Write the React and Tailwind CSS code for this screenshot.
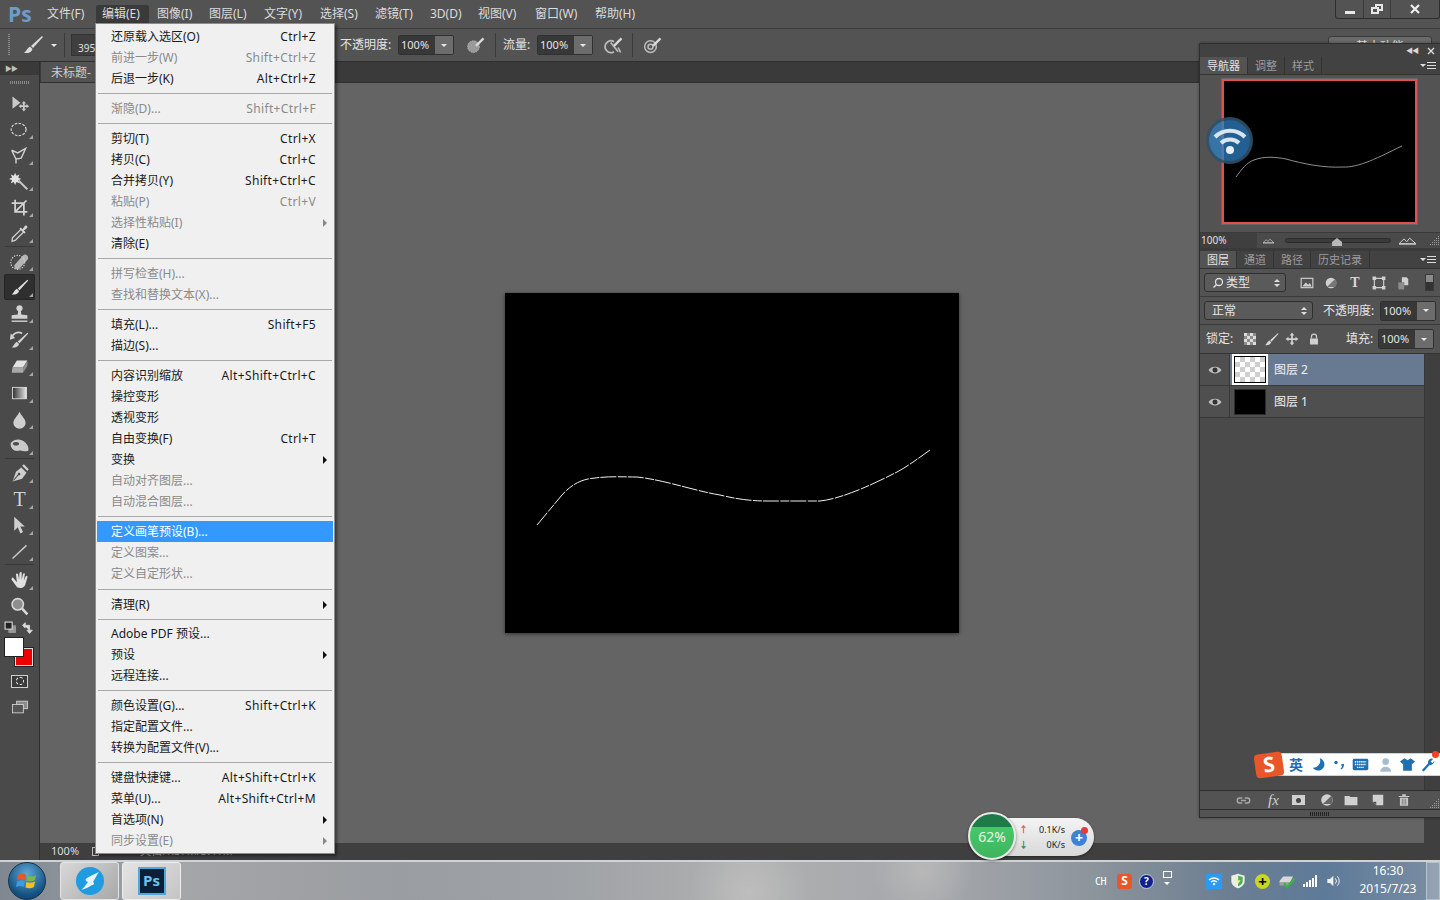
import React from 'react';

const topMenus = [
  ['文件(F)', 'w-[49px]'],
  ['编辑(E)', 'w-[53px] mr-[8px] pl-[6px] bg-[#3a3a3a] rounded-t-[2px]'],
  ['图像(I)', 'w-[52px]'],
  ['图层(L)', 'w-[55px]'],
  ['文字(Y)', 'w-[56px]'],
  ['选择(S)', 'w-[55px]'],
  ['滤镜(T)', 'w-[55px]'],
  ['3D(D)', 'w-[48px]'],
  ['视图(V)', 'w-[57px]'],
  ['窗口(W)', 'w-[60px]'],
  ['帮助(H)', 'w-[60px]'],
];

// null = separator, sep sets a separator of another height
const editMenu = [
  { t: '还原载入选区(O)', k: 'Ctrl+Z' },
  { t: '前进一步(W)', k: 'Shift+Ctrl+Z', d: 1 },
  { t: '后退一步(K)', k: 'Alt+Ctrl+Z' },
  null,
  { t: '渐隐(D)...', k: 'Shift+Ctrl+F', d: 1 },
  null,
  { t: '剪切(T)', k: 'Ctrl+X' },
  { t: '拷贝(C)', k: 'Ctrl+C' },
  { t: '合并拷贝(Y)', k: 'Shift+Ctrl+C' },
  { t: '粘贴(P)', k: 'Ctrl+V', d: 1 },
  { t: '选择性粘贴(I)', d: 1, a: 1 },
  { t: '清除(E)' },
  null,
  { t: '拼写检查(H)...', d: 1 },
  { t: '查找和替换文本(X)...', d: 1 },
  null,
  { t: '填充(L)...', k: 'Shift+F5' },
  { t: '描边(S)...' },
  null,
  { t: '内容识别缩放', k: 'Alt+Shift+Ctrl+C' },
  { t: '操控变形' },
  { t: '透视变形' },
  { t: '自由变换(F)', k: 'Ctrl+T' },
  { t: '变换', a: 1 },
  { t: '自动对齐图层...', d: 1 },
  { t: '自动混合图层...', d: 1 },
  null,
  { t: '定义画笔预设(B)...', h: 1 },
  { t: '定义图案...', d: 1 },
  { t: '定义自定形状...', d: 1 },
  { sep: 'h-[10px]' },
  { t: '清理(R)', a: 1 },
  { sep: 'h-[8px]' },
  { t: 'Adobe PDF 预设...' },
  { t: '预设', a: 1 },
  { t: '远程连接...' },
  null,
  { t: '颜色设置(G)...', k: 'Shift+Ctrl+K' },
  { t: '指定配置文件...' },
  { t: '转换为配置文件(V)...' },
  null,
  { t: '键盘快捷键...', k: 'Alt+Shift+Ctrl+K' },
  { t: '菜单(U)...', k: 'Alt+Shift+Ctrl+M' },
  { t: '首选项(N)', a: 1 },
  { t: '同步设置(E)', d: 1, a: 1 },
];

function Ico({ children, size = 22, box = 24, className = '' }) {
  return (
    <svg width={size} height={size} viewBox={`0 0 ${box} ${box}`} className={`shrink-0 ${className}`}>
      {children}
    </svg>
  );
}

const BrushGlyph = ({ c = '#d2d2d2' }) => (
  <g>
    <path d="M21 3 L22 4 L12 15 L10 13 Z" fill={c} />
    <path d="M9 13.5 L11.5 16 C10.5 19.5 7 20.5 3 20 C5.5 18.5 6 15 9 13.5 Z" fill={c} />
  </g>
);

const tool = {
  move: (
    <g fill="#c9c9c9">
      <path d="M4 4 L4 18 L13 11 Z" />
      <path d="M17 9 L19.5 12 L18 12 L18 14 L20 14 L20 12.5 L23 15 L20 17.5 L20 16 L18 16 L18 18 L19.5 18 L17 21 L14.5 18 L16 18 L16 16 L14 16 L14 17.5 L11 15 L14 12.5 L14 14 L16 14 L16 12 L14.5 12 Z" />
    </g>
  ),
  ellipse: <ellipse cx="11" cy="12" rx="8.5" ry="7" fill="none" stroke="#d2d2d2" strokeWidth="1.4" strokeDasharray="3 1.5" />,
  lasso: <path d="M3 6 L10 9 L19 4 L14 15 L8 16 L8 21 M8 16 L3 6" fill="none" stroke="#d2d2d2" strokeWidth="1.6" />,
  wand: (
    <g>
      <path d="M11 11 L21 21" stroke="#c9c9c9" strokeWidth="2.4" />
      <path d="M7 2 L8.5 5.5 L12 4 L10.5 7.5 L14 9 L10.5 10.5 L12 14 L8.5 12.5 L7 16 L5.5 12.5 L2 14 L3.5 10.5 L0 9 L3.5 7.5 L2 4 L5.5 5.5 Z" fill="#e2e2e2" />
    </g>
  ),
  crop: <path d="M7 3 L7 17 L21 17 M3 7 L17 7 L17 21 M7 17 L20 4" fill="none" stroke="#d2d2d2" strokeWidth="2" />,
  dropper: (
    <g>
      <path d="M14 7 L17 10 L7 20 L3.5 21 L4 17 Z" fill="none" stroke="#d2d2d2" strokeWidth="1.5" />
      <path d="M13 5 L15.5 7 L18 3.5 C20 2 22 4 20.5 6 L17 8.5 L19 11 L17.5 12 L12 6.5 Z" fill="#d2d2d2" />
    </g>
  ),
  heal: (
    <g>
      <path d="M7 15 L16 5 C19 2 24 7 21 10 L12 20 C8 23 4 18 7 15 Z" fill="#b4b4b4" />
      <circle cx="10" cy="13" r="8" fill="none" stroke="#d8d8d8" strokeWidth="1.2" strokeDasharray="1.5 1.5" />
    </g>
  ),
  brush: <BrushGlyph c="#e0e0e0" />,
  stamp: (
    <g fill="#d2d2d2">
      <circle cx="12" cy="6" r="3.5" />
      <path d="M10.5 8 L13.5 8 L14 13 L21 14 L21 18 L3 18 L3 14 L10 13 Z" />
      <rect x="3" y="20" width="18" height="1.6" />
    </g>
  ),
  history: (
    <g>
      <BrushGlyph />
      <path d="M3 9 A8 8 0 0 1 15 4" fill="none" stroke="#d2d2d2" strokeWidth="1.8" />
      <path d="M2 4 L7 9 L1 11 Z" fill="#d2d2d2" />
    </g>
  ),
  eraser: (
    <g>
      <path d="M9 5 L21 5 L16 13 L4 13 Z" fill="#e2e2e2" />
      <path d="M4 13 L16 13 L16 19 L3 19 Z" fill="#a8a8a8" />
      <path d="M16 13 L21 5 L21 11 L16 19 Z" fill="#8c8c8c" />
    </g>
  ),
  gradient: (
    <g>
      <defs>
        <linearGradient id="gr" x1="0" y1="0" x2="1" y2="0">
          <stop offset="0" stopColor="#2f2f2f" />
          <stop offset="1" stopColor="#e8e8e8" />
        </linearGradient>
      </defs>
      <rect x="4" y="5" width="16" height="13" fill="url(#gr)" stroke="#dcdcdc" strokeWidth="1" />
    </g>
  ),
  blur: <path d="M12 3 C14 8 19 11 19 16 A7 6.5 0 0 1 5 16 C5 11 10 8 12 3 Z" fill="#cfcfcf" />,
  smudge: (
    <g>
      <path d="M2 9 C6 4 14 4 18 8 C21 11 23 14 22 18 C18 20 15 17 11 18 C6 19 1 15 2 9 Z" fill="#c9c9c9" />
      <ellipse cx="8" cy="10" rx="3.5" ry="2" fill="#4a4a4a" />
    </g>
  ),
  pen: (
    <g>
      <path d="M14 5 L20 11 L15 18 L4 21 L8 10 Z" fill="#cfcfcf" />
      <path d="M15 3 L17 1.5 L22.5 7 L21 9 Z" fill="#cfcfcf" />
      <path d="M5 20 L11 13" stroke="#4a4a4a" strokeWidth="1.2" />
      <circle cx="11.5" cy="12.5" r="1.5" fill="#4a4a4a" />
    </g>
  ),
  select: <path d="M6 2 L6 18 L10 14 L13 21 L16 19.5 L13 13 L18 13 Z" fill="#cfcfcf" />,
  line: <path d="M4 20 L20 5" stroke="#c9c9c9" strokeWidth="1.6" />,
  hand: (
    <path d="M5 9 L9 14 L8 5 C8 3.5 10 3.5 10.5 5 L11.5 11 L12 3.5 C12.5 2 14.5 2 14.5 3.5 L14.5 11 L16 4.5 C16.5 3 18.5 3.5 18 5 L17 12 L19 7.5 C20 6.5 21.5 7 21 8.5 L18.5 17 C17 21 10 22 8 18 L3 11 C2.5 9.5 4 8 5 9 Z" fill="#e0e0e0" />
  ),
  zoom: (
    <g>
      <circle cx="10" cy="9.5" r="6.5" fill="#8e8e8e" stroke="#d8d8d8" strokeWidth="1.8" />
      <path d="M15 14.5 L21 21" stroke="#d8d8d8" strokeWidth="3" />
    </g>
  ),
};

function ToolBtn({ name, active, noFlag, className = '' }) {
  return (
    <div className={`relative h-[26px] shrink-0 flex items-center justify-center ${className}`}>
      {active && <div className="absolute left-[4px] top-0 w-[31px] h-[26px] rounded-[2px] bg-[#2f2f2f] border border-[#262626]" />}
      <div className="relative">
        {name === 'type' ? (
          <span className="block font-['Liberation_Serif',serif] text-[20px] leading-[22px] text-[#d2d2d2]">T</span>
        ) : (
          <Ico size={21}>{tool[name]}</Ico>
        )}
      </div>
      {!noFlag && <span className="absolute right-[6px] bottom-[3px] w-0 h-0 border-l-[4px] border-l-transparent border-b-[4px] border-b-[#a8a8a8]" />}
    </div>
  );
}

const ToolSep = () => <div className="h-[2px] shrink-0 mx-[5px] border-t border-[#383838] border-b-[#666]" />;

function Tools() {
  return (
    <div className="w-[40px] shrink-0 flex flex-col bg-[#4a4a4a] border-r border-[#2f2f2f]">
      <div className="h-[13px] shrink-0 bg-[#3a3a3a] flex items-center pl-[5px] text-[7px] leading-none text-[#c0c0c0] tracking-[-1px]">▶▶</div>
      <div className="h-[15px] shrink-0 flex items-center justify-center">
        <div className="w-[20px] h-[3px] bg-[repeating-linear-gradient(90deg,#8a8a8a_0_1px,transparent_1px_2px)]" />
      </div>
      <ToolBtn name="move" noFlag />
      <ToolBtn name="ellipse" />
      <ToolBtn name="lasso" />
      <ToolBtn name="wand" />
      <ToolBtn name="crop" />
      <ToolBtn name="dropper" />
      <ToolSep />
      <ToolBtn name="heal" />
      <ToolBtn name="brush" active />
      <ToolBtn name="stamp" />
      <ToolBtn name="history" className="mt-[1px]" />
      <ToolBtn name="eraser" />
      <ToolBtn name="gradient" className="mt-[1px]" />
      <ToolBtn name="blur" />
      <ToolBtn name="smudge" />
      <ToolSep />
      <ToolBtn name="pen" />
      <ToolBtn name="type" />
      <ToolBtn name="select" />
      <ToolBtn name="line" />
      <ToolSep />
      <ToolBtn name="hand" className="mt-[1px]" />
      <ToolBtn name="zoom" noFlag />
      <div className="h-[16px] shrink-0 flex items-center justify-between px-[4px]">
        <Ico size={13}>
          <rect x="8" y="8" width="14" height="14" fill="#999" />
          <rect x="2" y="2" width="13" height="13" fill="#222" stroke="#ddd" strokeWidth="2" />
        </Ico>
        <Ico size={13}>
          <path d="M4 8 L14 8 L14 18 M1 8 L6 3 L6 13 Z M9 17 L19 17 L14 23 Z" fill="#ddd" stroke="#ddd" strokeWidth="1.5" />
        </Ico>
      </div>
      <div className="relative h-[33px] shrink-0">
        <div className="absolute left-[15px] top-[13px] w-[18px] h-[18px] bg-[#ee0000] border border-[#ddd] outline outline-[#222]" />
        <div className="absolute left-[4px] top-[2px] w-[20px] h-[20px] bg-white border border-[#222]" />
      </div>
      <div className="h-[26px] shrink-0 flex items-center justify-center">
        <div className="w-[17px] h-[13px] bg-[#3a3a3a] border border-[#cfcfcf] flex items-center justify-center">
          <div className="w-[8px] h-[8px] rounded-full border border-dashed border-[#e8e8e8]" />
        </div>
      </div>
      <div className="h-[26px] shrink-0 flex items-center justify-center">
        <Ico size={20}>
          <rect x="8" y="5" width="13" height="9" fill="#8a8a8a" stroke="#d8d8d8" />
          <rect x="3" y="9" width="13" height="10" fill="#555" stroke="#d8d8d8" />
        </Ico>
      </div>
    </div>
  );
}

function PctInput({ className = '' }) {
  return (
    <div className={`flex h-[20px] w-[56px] rounded-[2px] border border-[#303030] overflow-hidden ${className}`}>
      <div className="w-[36px] bg-[#383838] text-[11px] leading-[18px] text-[#e4e4e4] pl-[2px]">100%</div>
      <div className="flex-1 bg-[#6c6c6c] flex items-center justify-center">
        <span className="w-0 h-0 border-x-[3px] border-x-transparent border-t-[3px] border-t-[#e8e8e8]" />
      </div>
    </div>
  );
}

function AirBrushIcon({ kind }) {
  return (
    <Ico size={20}>
      {kind === 'ring' && (
        <g fill="none" stroke="#bdbdbd" strokeWidth="1.8">
          <circle cx="9" cy="14" r="7" />
          <circle cx="9" cy="14" r="3" />
        </g>
      )}
      {kind === 'cross' && (
        <g fill="none" stroke="#bdbdbd" strokeWidth="2">
          <path d="M12 8 A7 7 0 1 0 12 20" />
          <path d="M8 9 L17 20 M17 15 L20 21" />
        </g>
      )}
      {!kind && <circle cx="9" cy="14" r="7" fill="#9a9a9a" stroke="#bdbdbd" strokeDasharray="2 1" />}
      <path d="M11 12 L20 3 L22 5 L13 14 Z" fill="#d8d8d8" />
    </Ico>
  );
}

function OptionsBar() {
  return (
    <div className="h-[34px] bg-[#535353] border-t border-[#3c3c3c] border-b border-b-[#2f2f2f] flex items-center">
      <div className="ml-[8px] w-[2px] h-[22px] bg-[repeating-linear-gradient(180deg,#8a8a8a_0_1px,transparent_1px_2px)]" />
      <div className="ml-[11px]"><Ico size={24}><BrushGlyph c="#dcdcdc" /></Ico></div>
      <span className="ml-[6px] w-0 h-0 border-x-[3px] border-x-transparent border-t-[3px] border-t-[#e8e8e8]" />
      <div className="ml-[7px] w-px h-[24px] bg-[#3a3a3a]" />
      <div className="ml-[6px] w-[60px] h-[22px] bg-[#3f3f3f] border border-[#333] text-[10px] text-[#e0e0e0] pl-[6px] pt-[6px] leading-[14px]">395</div>
      <span className="ml-[209px] text-[12px] text-[#e4e4e4] whitespace-nowrap w-[58px]">不透明度:</span>
      <PctInput />
      <div className="ml-[12px]"><AirBrushIcon /></div>
      <div className="ml-[9px] w-px h-[24px] bg-[#3a3a3a]" />
      <span className="ml-[7px] text-[12px] text-[#e4e4e4] w-[34px]">流量:</span>
      <PctInput />
      <div className="ml-[11px]"><AirBrushIcon kind="cross" /></div>
      <div className="ml-[8px] w-px h-[24px] bg-[#3a3a3a]" />
      <div className="ml-[10px]"><AirBrushIcon kind="ring" /></div>
    </div>
  );
}

function MenuBar() {
  return (
    <div className="h-[28px] bg-[#535353] flex items-center relative">
      <span className="w-[47px] pl-[8px] text-[21px] font-bold text-[#6f9cc6] leading-none font-['Open_Sans',sans-serif]">Ps</span>
      {topMenus.map(([label, w]) => (
        <div key={label} className={`${w} h-[19px] flex items-center text-[12px] text-[#dcdcdc] whitespace-nowrap`}>
          {label}
        </div>
      ))}
      <div className="ml-auto self-start flex h-[19px] rounded-b-[3px] border border-t-0 border-[#2e2e2e] text-[#e8e8e8]">
        <div className="w-[28px] flex items-end justify-center pb-[4px] border-r border-[#3a3a3a]"><div className="w-[10px] h-[3px] bg-[#e8e8e8]" /></div>
        <div className="w-[27px] flex items-center justify-center border-r border-[#3a3a3a]">
          <div className="relative w-[12px] h-[10px]">
            <div className="absolute right-0 top-0 w-[8px] h-[7px] border-2 border-[#e8e8e8]" />
            <div className="absolute left-0 bottom-0 w-[8px] h-[7px] border-2 border-[#e8e8e8] bg-[#535353]" />
          </div>
        </div>
        <div className="w-[48px] flex items-center justify-center">
          <Ico size={12}><path d="M4 4 L20 20 M20 4 L4 20" stroke="#ececec" strokeWidth="4.5" /></Ico>
        </div>
      </div>
    </div>
  );
}

function EditMenu() {
  return (
    <div className="absolute left-[95px] top-[23px] w-[240px] h-[831px] pt-[2px] bg-[#f0f0f0] border border-[#8c8c8c] shadow-[2px_2px_3px_rgba(0,0,0,0.45)] text-[12px] z-20">
      {editMenu.map((m, i) => {
        if (!m || m.sep) {
          return (
            <div key={i} className={`${m ? m.sep : 'h-[9px]'} flex items-center px-[2px]`}>
              <div className="w-full h-px bg-[#a8a8a8]" />
            </div>
          );
        }
        const color = m.h ? 'bg-[#3399ff] text-white' : m.d ? 'text-[#8a8a8a]' : 'text-[#1a1a1a]';
        return (
          <div key={i} className={`h-[21px] mx-[1px] pl-[14px] flex items-center justify-between whitespace-nowrap ${m.a ? 'pr-[6px]' : 'pr-[17px]'} ${color}`}>
            <span>{m.t}</span>
            {m.k && <span className="tracking-[0.35px]">{m.k}</span>}
            {m.a && <span className={`w-0 h-0 border-y-[4px] border-y-transparent border-l-[4px] ${m.d ? 'border-l-[#8a8a8a]' : 'border-l-[#111]'}`} />}
          </div>
        );
      })}
    </div>
  );
}

const curve = 'M32 232 L57 202 C66 192 76 186 90 185 C105 183 120 184 132 184 C160 187 190 198 215 202 C235 207 250 208 262 208 L315 208 C335 206 365 193 392 179 C405 172 415 164 425 157';

function DocArea() {
  return (
    <div className="flex-1 min-w-0 flex flex-col">
      <div className="h-[21px] bg-[#3a3a3a] border-b border-[#2f2f2f] flex items-end pl-px">
        <div className="w-[54px] h-[20px] bg-[#535353] text-[12px] leading-[22px] text-[#cfcfcf] pl-[10px] whitespace-nowrap overflow-hidden">未标题-</div>
      </div>
      <div className="flex-1 min-h-0 bg-[#646464] flex items-center justify-center">
        <div className="w-[454px] h-[340px] bg-black shadow-[0_1px_4px_rgba(0,0,0,0.5)]">
          <svg width="454" height="340" viewBox="0 0 454 340">
            <path d={curve} fill="none" stroke="#f0f0f0" strokeWidth="1" strokeDasharray="16 1.5 9 1" />
          </svg>
        </div>
      </div>
      <div className="h-[17px] bg-[#3f3f3f] flex items-center text-[11px] text-[#dcdcdc]">
        <span className="ml-[11px] w-[41px]">100%</span>
        <span className="w-[7px] h-[9px] border border-[#bbb]" />
        <span className="ml-[41px] text-[#bdbdbd]">文档:1.37M/3.41M</span>
      </div>
    </div>
  );
}

function PanelTabs({ tabs }) {
  return (
    <div className="h-[18px] bg-[#424242] border-b border-[#333] flex items-stretch text-[11px] leading-[17px] shrink-0">
      {tabs.map((t, i) => (
        <div key={t} className={`px-[7px] border-r border-[#333] whitespace-nowrap ${i === 0 ? 'bg-[#535353] text-[#e4e4e4]' : 'text-[#9c9c9c]'}`}>{t}</div>
      ))}
      <div className="ml-auto mr-[4px] flex items-center gap-[1px]">
        <span className="w-0 h-0 border-x-[3px] border-x-transparent border-t-[3px] border-t-[#ddd]" />
        <span className="w-[9px] h-[7px] bg-[repeating-linear-gradient(180deg,#ddd_0_1px,transparent_1px_3px)]" />
      </div>
    </div>
  );
}

const Grip = () => (
  <Ico size={11} box={11}>
    <g fill="#9a9a9a">
      <rect x="9" y="1" width="1" height="1" /><rect x="7" y="3" width="1" height="1" /><rect x="9" y="3" width="1" height="1" />
      <rect x="5" y="5" width="1" height="1" /><rect x="7" y="5" width="1" height="1" /><rect x="9" y="5" width="1" height="1" />
      <rect x="3" y="7" width="1" height="1" /><rect x="5" y="7" width="1" height="1" /><rect x="7" y="7" width="1" height="1" /><rect x="9" y="7" width="1" height="1" />
      <rect x="1" y="9" width="1" height="1" /><rect x="3" y="9" width="1" height="1" /><rect x="5" y="9" width="1" height="1" /><rect x="7" y="9" width="1" height="1" /><rect x="9" y="9" width="1" height="1" />
    </g>
  </Ico>
);

const Mountain = ({ w, h }) => (
  <svg width={w} height={h} viewBox="0 0 24 10" className="shrink-0">
    <path d="M0 9 L7 2 L11 6 L15 1 L24 9 Z" fill="none" stroke="#d0d0d0" strokeWidth="1.4" />
    <rect x="0" y="8.5" width="24" height="1.5" fill="#d0d0d0" />
  </svg>
);

function SmallIcon({ children }) {
  return <Ico size={14} box={24}>{children}</Ico>;
}

function Select({ label, w, search }) {
  return (
    <div className={`${w} h-[19px] rounded-[3px] border border-[#2f2f2f] bg-[#5a5a5a] flex items-center text-[12px] text-[#e4e4e4] pl-[7px]`}>
      {search && (
        <svg width="12" height="12" viewBox="0 0 12 12" className="mr-[2px]">
          <circle cx="7" cy="5" r="3.5" fill="none" stroke="#e0e0e0" strokeWidth="1.3" />
          <path d="M4.5 7.5 L1.5 10.5" stroke="#e0e0e0" strokeWidth="1.5" />
        </svg>
      )}
      <span>{label}</span>
      <span className="ml-auto mr-[5px] flex flex-col gap-[2px]">
        <span className="w-0 h-0 border-x-[3px] border-x-transparent border-b-[3px] border-b-[#ddd]" />
        <span className="w-0 h-0 border-x-[3px] border-x-transparent border-t-[3px] border-t-[#ddd]" />
      </span>
    </div>
  );
}

function Eye() {
  return (
    <svg width="14" height="10" viewBox="0 0 14 10">
      <path d="M0.5 5 C3 0.5 11 0.5 13.5 5 C11 9.5 3 9.5 0.5 5 Z" fill="#bfbfbf" />
      <circle cx="7" cy="5" r="2.5" fill="#333" />
    </svg>
  );
}

function LayerRow({ name, active, thumb }) {
  return (
    <div className={`h-[32px] flex border-b border-[#383838] ${active ? 'bg-[#687a92]' : 'bg-[#4f4f4f]'}`}>
      <div className="w-[30px] bg-[#4f4f4f] border-r border-[#383838] flex items-center justify-center"><Eye /></div>
      <div className="ml-[4px] self-center relative">{thumb}</div>
      <div className="ml-[8px] self-center text-[12px] text-[#efefef]">{name}</div>
    </div>
  );
}

function Panels() {
  return (
    <div className="absolute left-[1199px] top-[43px] w-[241px] h-[775px] flex flex-col bg-[#535353] border-t border-l border-b border-[#2e2e2e] rounded-tl-[2px] shadow-[0_0_3px_rgba(0,0,0,0.4)] z-10">
      <div className="h-[13px] bg-[#424242] flex items-center justify-end gap-[9px] pr-[5px] shrink-0">
        <span className="text-[7px] leading-none text-[#d8d8d8] tracking-[-1px]">◀◀</span>
        <Ico size={8}><path d="M3 3 L21 21 M21 3 L3 21" stroke="#ddd" strokeWidth="4" /></Ico>
      </div>
      <PanelTabs tabs={['导航器', '调整', '样式']} />
      <div className="h-[157px] shrink-0 pl-[22px] pt-[4px]">
        <div className="w-[195px] h-[145px] bg-black border-2 border-[#e05050] outline outline-[#666]">
          <svg width="191" height="141" viewBox="0 0 191 141">
            <path d="M12 96 C18 88 22 82 30 79 C40 75 52 76 62 78 C80 83 100 87 118 86 C135 87 155 76 178 65" fill="none" stroke="#8f8f8f" strokeWidth="1" />
          </svg>
        </div>
      </div>
      <div className="h-[17px] shrink-0 flex items-center bg-[#4a4a4a] border-y border-[#3a3a3a]">
        <div className="w-[57px] h-full bg-[#3f3f3f] text-[10px] leading-[15px] text-[#e0e0e0] pl-[1px]">100%</div>
        <div className="ml-[6px]"><Mountain w={11} h={6} /></div>
        <div className="relative ml-[11px] w-[106px] h-[5px] rounded-full bg-[#3a3a3a] border border-[#2c2c2c]">
          <div className="absolute left-[46px] -top-[1px] w-[10px] h-[8px] bg-[#b8b8b8] [clip-path:polygon(50%_0,100%_50%,100%_100%,0_100%,0_50%)]" />
        </div>
        <div className="ml-[8px]"><Mountain w={17} h={8} /></div>
        <div className="ml-auto"><Grip /></div>
      </div>
      <div className="h-[2px] shrink-0 bg-[#3a3a3a]" />
      <PanelTabs tabs={['图层', '通道', '路径', '历史记录']} />
      <div className="h-[28px] shrink-0 flex items-center border-b border-[#3a3a3a] pl-[4px]">
        <Select label="类型" w="w-[82px]" search />
        <div className="ml-[14px] flex items-center gap-[10px]">
          <SmallIcon><rect x="2" y="4" width="20" height="16" fill="none" stroke="#d0d0d0" strokeWidth="2" /><path d="M4 18 L10 11 L14 15 L17 12 L20 18 Z" fill="#d0d0d0" /></SmallIcon>
          <SmallIcon><circle cx="12" cy="12" r="9" fill="#d0d0d0" /><path d="M5 19 L19 5 A10 10 0 0 1 19 19 Z" fill="#777" /></SmallIcon>
          <span className="w-[14px] text-center font-['Liberation_Serif',serif] font-bold text-[14px] leading-[14px] text-[#d8d8d8]">T</span>
          <SmallIcon><path d="M4 4 H20 V20 H4 Z" fill="none" stroke="#d0d0d0" strokeWidth="2" /><path d="M1 1 H7 V7 H1 Z M17 1 H23 V7 H17 Z M1 17 H7 V23 H1 Z M17 17 H23 V23 H17 Z" fill="#d0d0d0" /></SmallIcon>
          <SmallIcon><path d="M10 2 H18 L21 5 V16 H14 V11 H10 Z" fill="#d0d0d0" /><rect x="4" y="11" width="10" height="12" fill="#8c8c8c" /></SmallIcon>
        </div>
        <div className="ml-[15px] w-[9px] h-[17px] bg-[linear-gradient(180deg,#8a8a8a_0_50%,#333_50%)] border border-[#3a3a3a]" />
      </div>
      <div className="h-[28px] shrink-0 flex items-center border-b border-[#3a3a3a] pl-[4px]">
        <Select label="正常" w="w-[109px]" />
        <span className="ml-[10px] w-[57px] text-[12px] text-[#e4e4e4] whitespace-nowrap">不透明度:</span>
        <PctInput />
      </div>
      <div className="h-[29px] shrink-0 flex items-center pl-[6px] border-b border-[#333]">
        <span className="w-[37px] text-[12px] text-[#e4e4e4]">锁定:</span>
        <div className="w-[12px] h-[12px] ml-[1px] bg-[conic-gradient(#8c8c8c_25%,#dcdcdc_0_50%,#8c8c8c_0_75%,#dcdcdc_0)] bg-[length:6px_6px]" />
        <div className="ml-[7px]"><Ico size={17}><BrushGlyph c="#d8d8d8" /></Ico></div>
        <div className="ml-[5px]">
          <Ico size={14}><path d="M12 1 L16 6 H13.5 V10.5 H18 V8 L23 12 L18 16 V13.5 H13.5 V18 H16 L12 23 L8 18 H10.5 V13.5 H6 V16 L1 12 L6 8 V10.5 H10.5 V6 H8 Z" fill="#d0d0d0" /></Ico>
        </div>
        <div className="ml-[9px]">
          <Ico size={12}><path d="M7 11 V7 A5 5 0 0 1 17 7 V11" fill="none" stroke="#d0d0d0" strokeWidth="2.5" /><rect x="4" y="11" width="16" height="12" fill="#d0d0d0" /></Ico>
        </div>
        <span className="ml-[26px] w-[32px] text-[12px] text-[#e4e4e4] whitespace-nowrap">填充:</span>
        <PctInput />
      </div>
      <div className="flex-1 min-h-0 flex">
        <div className="w-[225px] bg-[#4a4a4a] border-r border-[#383838]">
          <LayerRow
            name="图层 2"
            active
            thumb={
              <div className="w-[32px] h-[27px] border border-black outline-2 outline-white bg-[conic-gradient(#cfcfcf_25%,#fff_0_50%,#cfcfcf_0_75%,#fff_0)] bg-[length:10px_10px]" />
            }
          />
          <LayerRow name="图层 1" thumb={<div className="w-[32px] h-[26px] bg-black border border-[#2c2c2c]" />} />
        </div>
        <div className="flex-1 bg-[#3f3f3f]" />
      </div>
      <div className="h-[19px] shrink-0 border-t border-[#2e2e2e] flex items-center pl-[36px] relative">
        <div className="flex items-center gap-[12px]">
          <Ico size={15}><path d="M10 8 H6 A4 4 0 0 0 6 16 H10 M14 8 H18 A4 4 0 0 1 18 16 H14 M8 12 H16" fill="none" stroke="#a8a8a8" strokeWidth="2.2" /></Ico>
          <span className="w-[15px] ml-[5px] font-['Liberation_Serif',serif] italic text-[15px] leading-[14px] text-[#cfcfcf]">fx</span>
          <div className="-ml-[3px] w-[13px] h-[10px] bg-[#d0d0d0] flex items-center justify-center"><div className="w-[5px] h-[5px] rounded-full bg-[#444]" /></div>
          <Ico size={14} className="ml-[3px]"><circle cx="12" cy="12" r="10" fill="#d0d0d0" /><path d="M5 19 L19 5 A10 10 0 0 1 19 19 Z" fill="#666" /></Ico>
          <Ico size={14} className="-ml-[2px]"><path d="M1 5 H9 L11 7 H23 V21 H1 Z" fill="#d0d0d0" /></Ico>
          <Ico size={14} className="ml-[1px]"><path d="M3 3 H21 V21 H9 L3 15 Z" fill="#d0d0d0" /><path d="M3 15 H9 V21 Z" fill="#555" /></Ico>
          <Ico size={14}><path d="M3 5 H21 V7 H3 Z M9 2 H15 V5 H9 Z M5 8 H19 V22 H5 Z" fill="#c8c8c8" /><path d="M9 10 V20 M12 10 V20 M15 10 V20" stroke="#555" /></Ico>
        </div>
        <div className="absolute right-0 bottom-0"><Grip /></div>
      </div>
      <div className="h-[8px] shrink-0 border-t border-[#2e2e2e] flex items-center pl-[110px]">
        <div className="w-[20px] h-[4px] bg-[repeating-linear-gradient(90deg,#222_0_1px,transparent_1px_2px)]" />
      </div>
    </div>
  );
}

function WifiFloat() {
  return (
    <div className="absolute left-[1206px] top-[117px] w-[47px] h-[47px] rounded-full bg-[#2f7fc0c0] border-[3px] border-[#33333388] flex items-center justify-center z-10">
      <svg width="36" height="36" viewBox="0 0 36 36">
        <path d="M3 14 A21 21 0 0 1 33 14" fill="none" stroke="#d8e4ee" strokeWidth="4" />
        <path d="M9 20 A13 13 0 0 1 27 20" fill="none" stroke="#d8e4ee" strokeWidth="4" />
        <circle cx="18" cy="27" r="4" fill="#e8eef4" />
      </svg>
    </div>
  );
}

function SogouBar() {
  return (
    <div className="absolute left-[1255px] top-[753px] w-[185px] h-[26px] z-10">
      <div className="absolute left-[14px] top-[0] right-0 h-[23px] bg-white border-y border-[#c8d4e0] flex items-center pl-[20px] gap-[10px] text-[#1f6fb5]">
        <span className="text-[14px] font-bold leading-none w-[14px]">英</span>
        <Ico size={15} className="-ml-[2px]"><path d="M14 2 A10 10 0 1 1 3 17 A11 11 0 0 0 14 2 Z" fill="#1f6fb5" /></Ico>
        <Ico size={12} className="-ml-[3px]"><circle cx="6" cy="7" r="3.5" fill="#1f6fb5" /><path d="M17 10 H22 C22 16 20 19 16 21 L15 19 C17 18 18 16 18 14 H17 Z" fill="#1f6fb5" /></Ico>
        <Ico size={17} className="-ml-[3px]"><rect x="1" y="4" width="22" height="16" rx="2" fill="#1f6fb5" /><path d="M4 8 H20 M4 12 H20 M7 16 H17" stroke="#fff" strokeWidth="2" strokeDasharray="2 1" /></Ico>
        <Ico size={16}><circle cx="10" cy="7" r="5" fill="#a8bcd0" /><path d="M2 22 C2 12 18 12 18 22 Z" fill="#a8bcd0" /></Ico>
        <Ico size={15} className="-ml-[5px]"><path d="M7 2 L12 5 L17 2 L24 7 L20 11 L19 10 V22 H5 V10 L4 11 L0 7 Z" fill="#1f6fb5" /></Ico>
        <Ico size={15} className="-ml-[5px]"><path d="M3 21 L13 10 A6 6 0 0 1 21 3 L17 7 L20 10 L23 6 A7 7 0 0 1 15 13 L6 23 Z" fill="#1f6fb5" /></Ico>
      </div>
      <div className="absolute left-0 top-0 w-[28px] h-[24px] rounded-[4px] rotate-[-8deg] bg-[#e8562a] text-white text-[21px] font-bold leading-[22px] text-center">S</div>
      <div className="absolute right-[1px] -top-[2px] w-[7px] h-[7px] rounded-full bg-[#ee4422]" />
    </div>
  );
}

function NetWidget() {
  return (
    <div className="absolute left-[968px] top-[812px] w-[127px] h-[49px] z-30">
      <div className="absolute left-[20px] top-[6px] w-[106px] h-[38px] rounded-r-[19px] bg-[linear-gradient(180deg,#f4f4f4,#d8d8d8)] shadow-[0_1px_3px_rgba(0,0,0,0.4)]">
        <div className="absolute left-[35px] top-[4px] w-[42px] flex flex-col items-end text-[9px] leading-[15px] text-[#222]">
          <span>0.1K/s</span>
          <span>0K/s</span>
        </div>
        <div className="absolute left-[31px] top-[5px] text-[#d95a40] text-[9px] leading-[14px] font-bold">↑</div>
        <div className="absolute left-[31px] top-[20px] text-[#2e8b57] text-[9px] leading-[14px] font-bold">↓</div>
        <div className="absolute left-[83px] top-[12px] w-[16px] h-[16px] rounded-full bg-[#3d82d8] text-white text-[14px] leading-[15px] text-center font-bold">+</div>
        <div className="absolute left-[93px] top-[9px] w-[7px] h-[7px] rounded-full bg-[#e03b3b]" />
      </div>
      <div className="absolute left-0 top-0 w-[48px] h-[48px] rounded-full border-2 border-[#e8e8e8] overflow-hidden bg-[linear-gradient(180deg,#1f7a4a_0_30%,#46c868_30%,#3fb35e_100%)] shadow-[0_1px_3px_rgba(0,0,0,0.5)] flex items-center justify-center text-[14px] text-[#e8f6ec]">
        62%
      </div>
    </div>
  );
}

function Taskbar() {
  return (
    <div className="h-[40px] shrink-0 border-t-2 border-[#cfd3d6] bg-[radial-gradient(circle_at_52%_80%,#bdbdbc_0,transparent_60px),radial-gradient(circle_at_64%_20%,#b8b8b8_0,transparent_50px),linear-gradient(90deg,#7f8790_0%,#a4a6a8_12%,#9a9da1_28%,#9ea1a5_38%,#aeb0b0_52%,#a3a6aa_66%,#8c949c_76%,#6d7f92_85%,#5d7a99_92%,#7b8ea3_100%)] flex items-center relative">
      <div className="ml-[8px] w-[38px] h-[38px] rounded-full border border-[#16344e] bg-[radial-gradient(circle_at_50%_30%,#5fa8d8,#14507f_70%,#0e3a5f)] flex items-center justify-center">
        <svg width="22" height="22" viewBox="0 0 22 22">
          <path d="M2 5 C5 3 7 3 10 5 L9 10 C6.5 8.5 4 8.5 1 10 Z" fill="#e8562a" />
          <path d="M11.5 5.5 C14 7 17 7 20 5 L19 10 C16.5 11.5 13.5 11.5 10.5 10.5 Z" fill="#7ab648" />
          <path d="M1 11.5 C4 10 6.5 10 8.8 11.5 L8 17 C5.5 15.5 3 15.5 0 17 Z" fill="#3d9ae0" />
          <path d="M10.3 12 C13 13 16 13 19 11.5 L18 17 C15.5 18.5 12.5 18.5 9.5 17.5 Z" fill="#f4c020" />
        </svg>
      </div>
      <div className="ml-[14px] w-[59px] h-[38px] rounded-[3px] border border-[#e4e4e4] bg-[linear-gradient(135deg,#d8d8d8,#a8a8a8)] flex items-center justify-center">
        <div className="w-[28px] h-[28px] rounded-full bg-[#1f9be0] flex items-center justify-center">
          <svg width="20" height="20" viewBox="0 0 20 20"><path d="M1 19 C5 16 6 13 8 11 C5 10 5 8 7 7 C10 5 15 3 19 1 C16 5 15 8 13 11 C15 12 14 14 12 14 C9 16 5 18 1 19 Z" fill="#e8f4fc" /></svg>
        </div>
      </div>
      <div className="ml-[3px] w-[59px] h-[38px] rounded-[3px] border border-[#eeeeee] bg-[linear-gradient(135deg,#e4e4e4,#c4c4c4)] flex items-center justify-center">
        <div className="w-[28px] h-[28px] bg-[#0c1f38] border-2 border-[#4ea8dc] text-[#6ec2ee] text-[15px] font-bold leading-[22px] text-center font-['Open_Sans',sans-serif]">Ps</div>
      </div>
      <div className="ml-auto flex items-center text-white">
        <span className="w-[14px] font-['DejaVu_Sans_Mono',monospace] text-[10px] tracking-[-0.5px]">CH</span>
        <div className="ml-[8px] w-[15px] h-[15px] rounded-[3px] bg-[#e8562a] text-[12px] font-bold leading-[14px] text-center">S</div>
        <div className="ml-[7px] w-[15px] h-[15px] rounded-full bg-[#10208c] border border-[#c8d0e8] text-[10px] font-bold leading-[13px] text-center">?</div>
        <div className="ml-[5px] w-[16px] h-[20px] flex flex-col items-center gap-[4px]">
          <div className="w-[9px] h-[7px] border border-white" />
          <span className="w-0 h-0 border-x-[3px] border-x-transparent border-t-[3px] border-t-white" />
        </div>
        <div className="ml-[31px] w-[16px] h-[15px] bg-[#2b9af3] flex items-center justify-center">
          <svg width="12" height="10" viewBox="0 0 24 20"><path d="M2 8 A15 15 0 0 1 22 8 M6 12 A9 9 0 0 1 18 12" fill="none" stroke="#fff" strokeWidth="3" /><circle cx="12" cy="16" r="2.5" fill="#fff" /></svg>
        </div>
        <div className="ml-[8px]">
          <Ico size={16}><path d="M12 1 L22 4 V12 C22 18 16 22 12 23 C8 22 2 18 2 12 V4 Z" fill="#e8f0e8" /><path d="M12 4 L19 6 V12 C19 16 15 19 12 20 Z" fill="#4caf50" /><path d="M13 6 L8 13 H12 L10 19 L16 11 H12 Z" fill="#e8f0a0" /></Ico>
        </div>
        <div className="ml-[9px] w-[15px] h-[15px] rounded-full bg-[#c8d820] text-black text-[15px] font-bold leading-[14px] text-center">+</div>
        <div className="ml-[8px]">
          <Ico size={18}><path d="M2 12 L7 6 H20 L16 14 H2 Z" fill="#d8d8d8" /><path d="M2 14 H16 V18 H2 Z" fill="#a0a0a0" /><path d="M8 15 L12 20 L22 9" fill="none" stroke="#3cb24a" strokeWidth="3" /></Ico>
        </div>
        <div className="ml-[7px] flex items-end gap-[1px] h-[12px]">
          <div className="w-[2px] h-[3px] bg-white" />
          <div className="w-[2px] h-[5px] bg-white" />
          <div className="w-[2px] h-[7px] bg-white" />
          <div className="w-[2px] h-[9px] bg-white" />
          <div className="w-[2px] h-[12px] bg-white" />
        </div>
        <div className="ml-[9px]">
          <Ico size={16}><path d="M2 9 H6 L11 4 V20 L6 15 H2 Z" fill="#f0f0f0" /><path d="M14 8 A6 6 0 0 1 14 16 M17 5 A10 10 0 0 1 17 19" fill="none" stroke="#f0f0f0" strokeWidth="1.5" /></Ico>
        </div>
        <div className="ml-[11px] mb-[2px] w-[70px] text-center text-[12px] leading-[18px]">
          <div>16:30</div>
          <div>2015/7/23</div>
        </div>
        <div className="ml-[3px] w-[14px] h-[38px] border border-[#b8c0c8] bg-[#ffffff30]" />
      </div>
    </div>
  );
}

export default function App() {
  return (
    <div className="relative w-[1440px] h-[900px] overflow-hidden bg-[#535353] flex flex-col font-['Noto_Sans','Noto_Sans_CJK_SC',sans-serif]">
      <MenuBar />
      <OptionsBar />
      <div className="flex-1 min-h-0 flex">
        <Tools />
        <DocArea />
        <div className="w-[16px] shrink-0 bg-[#3f3f3f]" />
      </div>
      <Taskbar />
      <div className="absolute left-[1328px] top-[36px] w-[104px] h-[10px] overflow-hidden rounded-t-[3px] bg-[#6a6a6a] border border-[#3a3a3a] text-center text-[12px] leading-[20px] text-[#e0e0e0]">基本功能</div>
      <Panels />
      <WifiFloat />
      <SogouBar />
      <EditMenu />
      <NetWidget />
    </div>
  );
}
